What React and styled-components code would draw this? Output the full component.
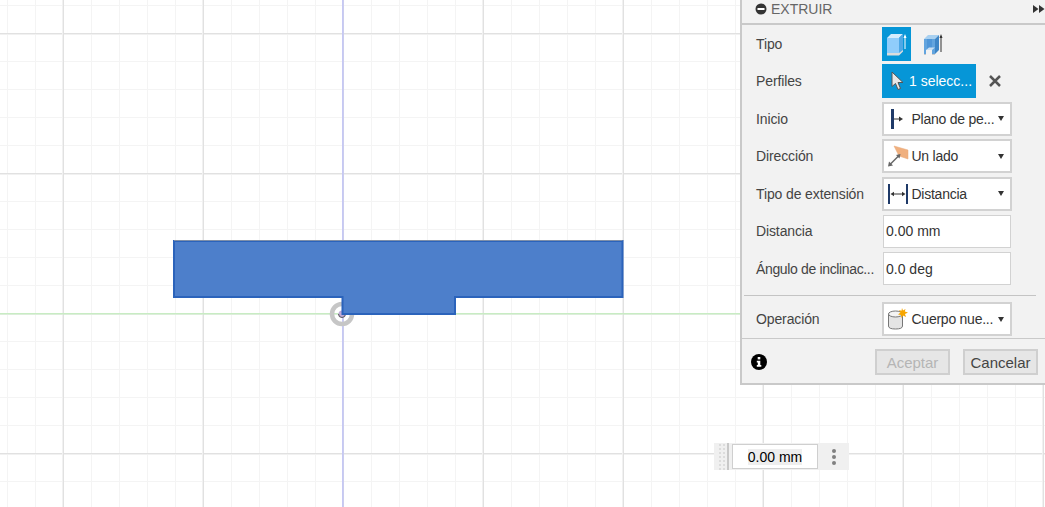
import React from 'react';
import styled, { createGlobalStyle } from 'styled-components';

const GlobalStyle = createGlobalStyle`
    html, body {
        margin: 0;
        padding: 0;
        background: #fff;
        font-family: "Liberation Sans", Arial, sans-serif;
    }
`;

const CubeSolidIcon = () => (
    <svg width="29" height="34" viewBox="0 0 29 34">
        <path d="M5 11 L9 7 L21 7 L17 11 Z" fill="#d4ecfd" />
        <path d="M17 11 L21 7 L21 24 L17 28 Z" fill="#4fa8e6" />
        <rect x="5" y="11" width="12" height="15" fill="#90cdfb" />
        <path d="M5 26 H17 L21 23 V24.500 L17 28.500 H5 Z" fill="#dcdcdc" />
        <path d="M23 22 V9" stroke="#fff" strokeWidth="1" />
        <path d="M21.500 11 L23 7 L24.500 11 Z" fill="#fff" />
    </svg>
);

const CubeShellIcon = () => (
    <svg width="24" height="24" viewBox="0 0 24 24">
        <path d="M3 7 L7 3 L18 3 L14 7 Z" fill="#a8d0f0" />
        <path d="M3 7 H14 V22 H11 V18 H5 V22 H3 Z" fill="#62a4de" />
        <path d="M6 7 H11 V17 H6 Z" fill="#4f96d8" />
        <path d="M14 7 L18 3 V18 L14 22 Z" fill="#3d85c6" />
        <path d="M5 18 H11 L14 15.500 H8 Z" fill="#c9dff2" />
        <path d="M3 22.500 H5 M11 22.500 H14" stroke="#c8c8c8" strokeWidth="1" />
        <path d="M20 20 V4" stroke="#333" strokeWidth="1" />
        <path d="M18.500 6 L20 2 L21.500 6 Z" fill="#333" />
    </svg>
);

const CursorIcon = () => (
    <svg width="14" height="20" viewBox="0 0 14 20">
        <path d="M1 1 V15.500 L4.500 12.500 L7 18.500 L9.500 17.500 L7 11.500 H12 Z" fill="#e8e8e8" stroke="#555" strokeWidth="1" />
    </svg>
);

const CloseIcon = () => (
    <svg width="12" height="12" viewBox="0 0 12 12">
        <path d="M1 1 L11 11 M11 1 L1 11" stroke="#555" strokeWidth="2.500" />
    </svg>
);

const PlaneIcon = () => (
    <svg width="18" height="20" viewBox="0 0 18 20">
        <rect x="2" y="0" width="3" height="20" fill="#1f3a68" />
        <path d="M5 10 H11" stroke="#333" strokeWidth="1" />
        <path d="M10 7.500 L14 10 L10 12.500 Z" fill="#333" />
    </svg>
);

const DirectionIcon = () => (
    <svg width="22" height="22" viewBox="0 0 22 22">
        <path d="M7 1 L21 5 V14 L12 11 Z" fill="#f0b07f" stroke="#e8a878" strokeWidth="0.500" />
        <path d="M2.500 20 L12 10.500" stroke="#666" strokeWidth="1.500" />
        <path d="M1 21.500 L2 16.500 L6 20.500 Z M13.500 9 L12.500 13.500 L9 10 Z" fill="#666" />
    </svg>
);

const DistanceIcon = () => (
    <svg width="22" height="22" viewBox="0 0 22 22">
        <rect x="1" y="1" width="2" height="20" fill="#1f3a68" />
        <rect x="19" y="1" width="2" height="20" fill="#1f3a68" />
        <path d="M5 11 H17" stroke="#333" strokeWidth="1" />
        <path d="M3.500 11 L7 8.800 V13.200 Z M18.500 11 L15 8.800 V13.200 Z" fill="#333" />
    </svg>
);

const BodyIcon = () => (
    <svg width="22" height="22" viewBox="0 0 22 22">
        <path d="M1.500 6 V18 Q1.500 21 8.500 21 Q15.500 21 15.500 18 V6 Z" fill="#e4e4e4" stroke="#777" strokeWidth="1" />
        <ellipse cx="8.500" cy="6" rx="7" ry="3" fill="#f4f4f4" stroke="#777" strokeWidth="1" />
        <path d="M15 0 L16 2.500 L18.500 1 L17.800 3.500 L21 4.500 L18 6 L19 9 L16 7.500 L14.500 10 L14 7 L11 6.500 L13.500 4.500 L12 2 L14.500 2.800 Z" fill="#f7a600" />
    </svg>
);

const CollapseIcon = () => (
    <svg width="12" height="12" viewBox="0 0 12 12">
        <circle cx="6" cy="6" r="5.500" fill="#333" />
        <rect x="2.500" y="5" width="7" height="2" fill="#fff" />
    </svg>
);

const ExpandIcon = () => (
    <svg width="12" height="8" viewBox="0 0 12 8">
        <path d="M0 0 L5.500 4 L0 8 Z M6 0 L11.500 4 L6 8 Z" fill="#333" />
    </svg>
);

const InfoIcon = () => (
    <svg width="16" height="16" viewBox="0 0 16 16">
        <circle cx="8" cy="8" r="8" fill="#000" />
        <rect x="6.700" y="3" width="2.600" height="2.400" fill="#fff" />
        <path d="M5.800 6.700 H9.300 V11 H10.300 V12.800 H5.800 V11 H6.800 V8.400 H5.800 Z" fill="#fff" />
    </svg>
);

const SceneDrawing = () => (
    <Scene width="1045" height="507" viewBox="0 0 1045 507">
        <path d="M342.900 0 V507" stroke="#bcbff6" strokeWidth="1.400" />
        <path d="M0 313.700 H1045" stroke="#c8ecc3" strokeWidth="1.400" />
        <circle cx="342" cy="314" r="10" fill="none" stroke="#c6c6c6" strokeWidth="4.500" />
        <circle cx="342" cy="314" r="3.500" fill="#c0aad8" />
        <path d="M338.500 314 A3.500 3.500 0 0 0 345.500 314" fill="none" stroke="#555" strokeWidth="1" />
        <path
            d="M174 241 H622.500 V297 H455 V314 H342.500 V297 H174 Z"
            fill="#4d7fcb"
            stroke="#2b63bb"
            strokeWidth="2"
        />
        <path d="M174 240.500 H622.500" stroke="#7f8fa8" strokeWidth="1" />
    </Scene>
);

const Dropdown = ({ icon, label }) => (
    <SelectBox>
        <SelectIcon>{icon}</SelectIcon>
        <SelectLabel>{label}</SelectLabel>
        <Caret />
    </SelectBox>
);

const App = () => {
    return (
        <Viewport>
            <GlobalStyle />
            <SceneDrawing />

            <Panel>
                <PanelHeader>
                    <CollapseIcon />
                    <PanelTitle>EXTRUIR</PanelTitle>
                    <ExpandSlot><ExpandIcon /></ExpandSlot>
                </PanelHeader>

                <PanelBody>
                    <Row>
                        <RowLabel>Tipo</RowLabel>
                        <TypeButton><CubeSolidIcon /></TypeButton>
                        <TypeAlt><CubeShellIcon /></TypeAlt>
                    </Row>
                    <Row>
                        <RowLabel>Perfiles</RowLabel>
                        <SelectionButton>
                            <CursorIcon />
                            <span>1 selecc...</span>
                        </SelectionButton>
                        <ClearButton><CloseIcon /></ClearButton>
                    </Row>
                    <Row>
                        <RowLabel>Inicio</RowLabel>
                        <Dropdown icon={<PlaneIcon />} label="Plano de pe..." />
                    </Row>
                    <Row>
                        <RowLabel>Dirección</RowLabel>
                        <Dropdown icon={<DirectionIcon />} label="Un lado" />
                    </Row>
                    <Row>
                        <RowLabel>Tipo de extensión</RowLabel>
                        <Dropdown icon={<DistanceIcon />} label="Distancia" />
                    </Row>
                    <Row>
                        <RowLabel>Distancia</RowLabel>
                        <ValueInput>0.00 mm</ValueInput>
                    </Row>
                    <Row>
                        <RowLabel $tight>Ángulo de inclinac...</RowLabel>
                        <ValueInput>0.0 deg</ValueInput>
                    </Row>
                    <Separator />
                    <OperationRow>
                        <RowLabel>Operación</RowLabel>
                        <Dropdown icon={<BodyIcon />} label="Cuerpo nue..." />
                    </OperationRow>
                </PanelBody>

                <PanelFooter>
                    <InfoIcon />
                    <FooterButtons>
                        <FooterButton disabled>Aceptar</FooterButton>
                        <FooterButton>Cancelar</FooterButton>
                    </FooterButtons>
                </PanelFooter>
            </Panel>

            <FloatingInput>
                <Grip />
                <FloatingField><Selected>0.00 mm</Selected></FloatingField>
                <MoreDots>
                    <Dot />
                    <Dot />
                    <Dot />
                </MoreDots>
            </FloatingInput>
        </Viewport>
    );
};

const Viewport = styled.div`
    position: relative;
    width: 1045px;
    height: 507px;
    overflow: hidden;
    background-color: #fff;
    background-image:
        linear-gradient(to right, #f1f1f1 1px, #e1e1e1 1px, #e1e1e1 2px, transparent 2px),
        linear-gradient(to bottom, #e1e1e1 1px, #f1f1f1 1px, #f1f1f1 2px, transparent 2px),
        linear-gradient(to right, #f4f4f4 1px, transparent 1px),
        linear-gradient(to bottom, #f4f4f4 1px, transparent 1px);
    background-size: 140px 140px, 140px 140px, 28px 28px, 28px 28px;
    background-position: 62px 0, 0 33px, 7px 0, 0 5px;
`;

const Scene = styled.svg`
    position: absolute;
    top: 0;
    left: 0;
`;

const Panel = styled.div`
    position: absolute;
    top: 0;
    left: 740px;
    width: 305px;
    height: 385px;
    box-sizing: border-box;
    display: flex;
    flex-direction: column;
    background: #f2f2f2;
    border-left: 2px solid #c9c9c9;
    border-bottom: 2px solid #c9c9c9;
    color: #3c3c3c;
    font-size: 14px;
`;

const PanelHeader = styled.div`
    height: 25px;
    box-sizing: border-box;
    flex: none;
    display: flex;
    align-items: center;
    gap: 4px;
    padding: 0 0 6px 13px;
    border-bottom: 2px solid #c9c9c9;
`;

const PanelTitle = styled.span`
    color: #666;
    font-size: 14px;
`;

const ExpandSlot = styled.span`
    display: flex;
    margin-left: auto;
`;

const PanelBody = styled.div`
    flex: none;
    display: flex;
    flex-direction: column;
    height: 314px;
    box-sizing: border-box;
    border-bottom: 1px solid #c9c9c9;
`;

const Row = styled.div`
    flex: none;
    height: 37.5px;
    display: flex;
    align-items: center;
    padding-left: 14px;
`;

const OperationRow = styled(Row)`
    height: 38px;
    margin-top: 5px;
`;

const RowLabel = styled.span`
    width: 126px;
    flex: none;
    white-space: nowrap;
    color: #444;
    letter-spacing: ${props => props.$tight ? '-0.35px' : '-0.12px'};
`;

const TypeButton = styled.div`
    width: 29px;
    height: 34px;
    background: #0696d7;
    display: flex;
`;

const TypeAlt = styled.div`
    display: flex;
    margin-left: 10px;
`;

const SelectionButton = styled.div`
    width: 94px;
    height: 34px;
    box-sizing: border-box;
    display: flex;
    align-items: center;
    gap: 4px;
    padding-left: 9px;
    background: #0696d7;
    color: #fff;
    white-space: nowrap;
`;

const ClearButton = styled.div`
    display: flex;
    margin-left: 13px;
`;

const SelectBox = styled.div`
    width: 130px;
    height: 34px;
    box-sizing: border-box;
    display: flex;
    align-items: center;
    background: #fff;
    border: 2px solid #d2d2d2;
    color: #333;
`;

const SelectIcon = styled.span`
    width: 27.5px;
    flex: none;
    display: flex;
    justify-content: center;
`;

const SelectLabel = styled.span`
    flex: 1;
    min-width: 0;
    white-space: nowrap;
    letter-spacing: -0.25px;
`;

const Caret = styled.span`
    width: 0;
    height: 0;
    margin-right: 6px;
    border-left: 3.500px solid transparent;
    border-right: 3.500px solid transparent;
    border-top: 5px solid #333;
`;

const ValueInput = styled.div`
    width: 128px;
    height: 33px;
    margin-left: 1px;
    box-sizing: border-box;
    display: flex;
    align-items: center;
    padding-left: 2px;
    background: #fff;
    border: 1px solid #d2d2d2;
    color: #333;
`;

const Separator = styled.div`
    height: 1px;
    margin: 7px 9px 0 2px;
    background: #c4c4c4;
`;

const PanelFooter = styled.div`
    flex: 1;
    display: flex;
    align-items: center;
    padding: 2px 7px 0 9px;
`;

const FooterButtons = styled.div`
    display: flex;
    gap: 13px;
    margin-left: auto;
`;

const FooterButton = styled.button`
    width: 75px;
    height: 26px;
    padding: 0;
    box-sizing: border-box;
    background: #e6e6e6;
    border: 2px solid #cfcfcf;
    border-radius: 0;
    color: ${props => props.disabled ? '#b5b5b5' : '#444'};
    font-family: inherit;
    font-size: 15px;
`;

const FloatingInput = styled.div`
    position: absolute;
    left: 714px;
    top: 443px;
    width: 135px;
    height: 27px;
    display: flex;
    align-items: center;
    background: #f0f0f0;
`;

const Grip = styled.div`
    width: 9px;
    height: 27px;
    margin-left: 4px;
    box-sizing: content-box;
    border-right: 2px solid #c8c8c8;
    background-image: radial-gradient(#dcdcdc 1px, transparent 1px);
    background-size: 4px 4px;
`;

const FloatingField = styled.div`
    width: 86px;
    height: 25px;
    margin-left: 3px;
    box-sizing: border-box;
    display: flex;
    align-items: center;
    justify-content: center;
    background: #fff;
    border: 1px solid #cfcfcf;
    color: #000;
    font-size: 14px;
`;

const Selected = styled.span`
    background: #eeeeee;
`;

const MoreDots = styled.div`
    display: flex;
    flex-direction: column;
    gap: 2px;
    margin-left: 14px;
`;

const Dot = styled.span`
    width: 4px;
    height: 4px;
    border-radius: 50%;
    background: #808080;
`;

export default App;
